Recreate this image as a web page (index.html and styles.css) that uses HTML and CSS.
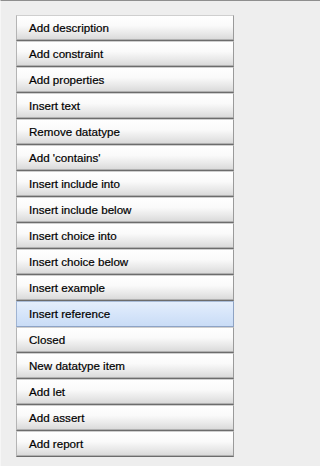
FILE: index.html
```html
<!DOCTYPE html>
<html>
<head>
<meta charset="utf-8">
<link rel="stylesheet" href="styles.css">
</head>
<body>
<div class="panel">
  <div class="menu">
    <div class="btn">Add description</div>
    <div class="btn">Add constraint</div>
    <div class="btn">Add properties</div>
    <div class="btn">Insert text</div>
    <div class="btn">Remove datatype</div>
    <div class="btn">Add 'contains'</div>
    <div class="btn">Insert include into</div>
    <div class="btn">Insert include below</div>
    <div class="btn">Insert choice into</div>
    <div class="btn">Insert choice below</div>
    <div class="btn">Insert example</div>
    <div class="btn selected">Insert reference</div>
    <div class="btn">Closed</div>
    <div class="btn">New datatype item</div>
    <div class="btn">Add let</div>
    <div class="btn">Add assert</div>
    <div class="btn">Add report</div>
  </div>
</div>
</body>
</html>
```
FILE: styles.css
```css
html, body {
  margin: 0;
  padding: 0;
  background: #eeeeee;
}
.panel {
  min-height: 466px;
  box-sizing: border-box;
  border-top: 1px solid #8e8e8e;
  border-left: 1px solid #f6f6f6;
  background: #eeeeee;
  padding: 14px 0 0 15px;
}
.menu {
  display: flex;
  flex-direction: column;
  width: 218px;
}
.btn {
  box-sizing: border-box;
  height: 26px;
  border-top: 1px solid #cfcfcf;
  border-left: 1px solid #b4b4b4;
  border-right: 1px solid #9a9a9a;
  border-bottom: 1px solid #6c6c6c;
  box-shadow: inset 0 -1px 0 #b0b0b0;
  background: linear-gradient(to bottom, #ffffff 0%, #fafafa 40%, #e4e4e4 80%, #d8d8d8 100%);
  font-family: "Liberation Sans", Arial, sans-serif;
  font-size: 11.6px;
  color: #000;
  -webkit-text-stroke: 0.2px #000;
  line-height: 24px;
  padding-left: 12px;
  white-space: nowrap;
}
.btn.selected {
  border-top-color: #a9bcd8;
  border-left-color: #9fb3d1;
  border-right-color: #8ea3c3;
  border-bottom-color: #8da3c6;
  box-shadow: none;
  background: linear-gradient(to bottom, #e4eefc 0%, #d6e5fa 50%, #c9dcf6 100%);
}
```
